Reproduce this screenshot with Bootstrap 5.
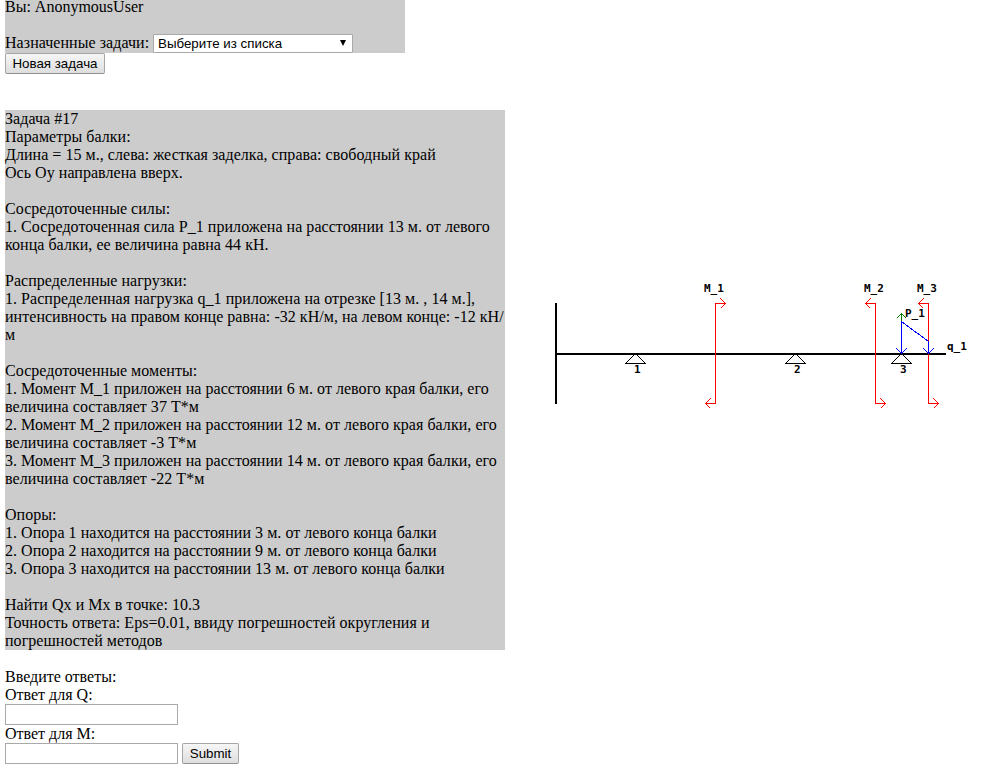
<!DOCTYPE html>
<html lang="ru">
<head>
<meta charset="utf-8">
<title>Задача #17</title>
<link href="https://cdn.jsdelivr.net/npm/bootstrap@5.3.0/dist/css/bootstrap.min.css" rel="stylesheet">
<style>
body{font:16px/18px "Liberation Serif","Times New Roman",serif;color:#000;background:#fff;height:770px}
.page{padding-left:5px;height:770px}
.left-side{width:500px}
.shade{background:#ccc}
.user-box{width:400px;height:53px}
.user-name{margin-top:-2px;height:36px}
.pick-row{height:19px}
.pick-label{width:148px;letter-spacing:.05px}
.task-box{height:540px;margin-top:36px;letter-spacing:.04px}
.form-select.task-pick{width:200px;height:19px;border:1px solid #a9a9a9;border-radius:1px;padding:0 4px;font:13.33px/17px "Liberation Sans",Arial,sans-serif;color:#000;background:#fff}
.pick-wrap::after{content:"";position:absolute;right:7px;top:6px;border:solid transparent;border-width:6px 3px 0;border-top-color:#000}
.btn.grey-btn{height:21px;padding:0;font:13.33px/19px "Liberation Sans",Arial,sans-serif;color:#000;border:1px solid #a6a6a6;border-bottom-color:#919191;border-radius:2px;background:linear-gradient(#f6f6f6,#dedede)}
.new-btn{width:100px}.send-btn{width:57px}
.form-control.answer{width:173px;height:21px;border:1px solid #a9a9a9;border-radius:0;padding:1px 2px;font:13.33px "Liberation Sans",Arial,sans-serif}
.answers{margin-top:18px}
.beam{margin:280px 0 0 40px;font:bold 11px "DejaVu Sans Mono",monospace}
.ln{display:block;width:max-content;white-space:pre;min-height:18px}
</style>
<script src="https://cdn.jsdelivr.net/npm/bootstrap@5.3.0/dist/js/bootstrap.bundle.min.js"></script>
</head>
<body class="overflow-hidden">
<main class="page d-flex align-items-start">
<section class="left-side flex-shrink-0 text-nowrap">
<div class="shade user-box overflow-hidden">
<div class="user-name">Вы: AnonymousUser</div>
<div class="pick-row d-flex"><label class="pick-label" for="pick">Назначенные задачи:</label><div class="pick-wrap position-relative"><select id="pick" class="form-select task-pick"><option>Выберите из списка</option></select></div></div>
</div>
<button class="btn grey-btn new-btn d-block">Новая задача</button>
<div class="shade task-box"><span class="ln">Задача #17</span><span class="ln">Параметры балки:</span><span class="ln">Длина = 15 м., слева: жесткая заделка, справа: свободный край</span><span class="ln">Ось Oy направлена вверх.</span><span class="ln"></span><span class="ln">Сосредоточенные силы:</span><span class="ln">1. Сосредоточенная сила P_1 приложена на расстоянии 13 м. от левого</span><span class="ln">конца балки, ее величина равна 44 кН.</span><span class="ln"></span><span class="ln">Распределенные нагрузки:</span><span class="ln">1. Распределенная нагрузка q_1 приложена на отрезке [13 м. , 14 м.],</span><span class="ln">интенсивность на правом конце равна: -32 кН/м, на левом конце: -12 кН/</span><span class="ln">м</span><span class="ln"></span><span class="ln">Сосредоточенные моменты:</span><span class="ln">1. Момент M_1 приложен на расстоянии 6 м. от левого края балки, его</span><span class="ln">величина составляет 37 Т*м</span><span class="ln">2. Момент M_2 приложен на расстоянии 12 м. от левого края балки, его</span><span class="ln">величина составляет -3 Т*м</span><span class="ln">3. Момент M_3 приложен на расстоянии 14 м. от левого края балки, его</span><span class="ln">величина составляет -22 Т*м</span><span class="ln"></span><span class="ln">Опоры:</span><span class="ln">1. Опора 1 находится на расстоянии 3 м. от левого конца балки</span><span class="ln">2. Опора 2 находится на расстоянии 9 м. от левого конца балки</span><span class="ln">3. Опора 3 находится на расстоянии 13 м. от левого конца балки</span><span class="ln"></span><span class="ln">Найти Qx и Mx в точке: 10.3</span><span class="ln">Точность ответа: Eps=0.01, ввиду погрешностей округления и</span><span class="ln">погрешностей методов</span></div>
<form class="answers" onsubmit="return false">
<div>Введите ответы:</div>
<label class="d-block" for="q">Ответ для Q:</label>
<input id="q" class="form-control answer">
<label class="d-block" for="m">Ответ для M:</label>
<div class="d-flex gap-1"><input id="m" class="form-control answer"><button class="btn grey-btn send-btn">Submit</button></div>
</form>
</section>
<svg class="beam flex-shrink-0" width="430" height="135" viewBox="545 280 430 135" fill="none" shape-rendering="crispEdges">
<path stroke="#000" stroke-width="2" d="M556 303V404M555 354H946"/>
<path stroke="#000" d="M635.5 353.500l-10 10h20zM795.500 353.500l-10 10h20zM901.500 353.500l-10 10h20z"/>
<path stroke="green" d="M901.500 322V313.500M896.500 318.500l5-5 5 5"/>
<path stroke="red" d="M725.500 303.500H715.500V403.500H705.500M720.500 298.500l5 5-5 5M710.500 398.500l-5 5 5 5M865.500 303.500H875.500V403.500H885.500M870.500 298.500l-5 5 5 5M880.500 398.500l5 5-5 5M918.500 303.500H928.500V403.500H938.500M923.500 298.500l-5 5 5 5M933.500 398.500l5 5-5 5"/>
<path stroke="#00f" d="M901.500 353.500V321.500L928.500 341.500V353.500M896.500 348.500l5 5 5-5M923.500 348.500l5 5 5-5"/>
<g fill="#000"><text x="704" y="292">M_1</text><text x="864" y="292">M_2</text><text x="917" y="292">M_3</text><text x="905" y="317">P_1</text><text x="947" y="350">q_1</text><text x="634" y="373">1</text><text x="794" y="373">2</text><text x="900" y="373">3</text></g>
</svg>
</main>
</body>
</html>
